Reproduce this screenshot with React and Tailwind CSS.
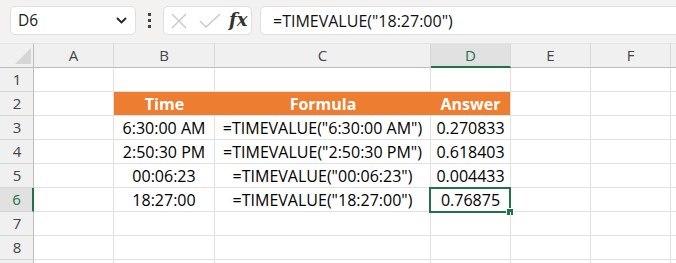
import React from "react";

const rows = [
  { n: 1, b: "", c: "", d: "" },
  { n: 2, b: "Time", c: "Formula", d: "Answer", head: true },
  { n: 3, b: "6:30:00 AM", c: '=TIMEVALUE("6:30:00 AM")', d: "0.270833" },
  { n: 4, b: "2:50:30 PM", c: '=TIMEVALUE("2:50:30 PM")', d: "0.618403" },
  { n: 5, b: "00:06:23", c: '=TIMEVALUE("00:06:23")', d: "0.004433" },
  { n: 6, b: "18:27:00", c: '=TIMEVALUE("18:27:00")', d: "0.76875", sel: true },
  { n: 7, b: "", c: "", d: "" },
  { n: 8, b: "", c: "", d: "" },
  { n: "", b: "", c: "", d: "" },
];

const cell = "h-[24px] border-b border-r border-[#e1e1e1] flex items-center justify-center text-[16px] text-black whitespace-nowrap";
const orange = "h-[24px] border-b border-[#e1e1e1] bg-[#ed7d31] flex items-center justify-center text-[16px] font-bold text-white whitespace-nowrap";

function Row({ r }) {
  return (
    <>
      <div
        className={
          r.sel
            ? "h-[24px] border-b border-[#d4d4d4] border-r-2 border-r-[#217346] bg-[#e1e1e1] text-[#217346] flex items-center justify-center text-[15px]"
            : "h-[24px] border-b border-[#d4d4d4] border-r border-r-[#bcbcbc] bg-[#f0f0f0] text-[#444] flex items-center justify-center text-[15px]"
        }
      >
        <span className="ml-[1px]">{r.n}</span>
      </div>
      <div className={cell}></div>
      {r.head ? (
        <>
          <div className={orange}>{r.b}</div>
          <div className={orange}>{r.c}</div>
          <div className={orange + " border-r border-r-[#e1e1e1]"}>{r.d}</div>
        </>
      ) : (
        <>
          <div className={cell}>{r.b}</div>
          <div className={cell}>{r.c}</div>
          <div className={cell + " relative"}>
            {r.d}
            {r.sel && (
              <div className="absolute -left-[2px] -top-[1px] w-[82px] h-[26px] border-2 border-[#217346]">
                <div className="absolute -right-[4px] -bottom-[4px] w-[6px] h-[6px] bg-[#217346] outline outline-1 outline-white"></div>
              </div>
            )}
          </div>
        </>
      )}
      <div className={cell}></div>
      <div className={cell}></div>
      <div className="h-[24px] border-b border-[#e1e1e1]"></div>
    </>
  );
}

export default function App() {
  const colHead = "h-[24px] border-b border-[#bcbcbc] border-r border-r-[#d9d9d9] bg-[#f0f0f0] flex items-center justify-center text-[15px] text-[#444]";
  return (
    <div className="w-[676px] h-[263px] overflow-hidden bg-white font-['Open_Sans',sans-serif]">
      {/* toolbar */}
      <div className="h-[44px] bg-[#f3f2f1] flex items-start pt-[6px] pl-[10px] border-b border-[#e6e4e2]">
        <div className="w-[126px] h-[29px] bg-white rounded-[5px] border border-[#e1dfdd] flex items-center pl-[7px] pr-[8px] justify-between">
          <span className="text-[15.5px] text-[#222]">D6</span>
          <svg width="11" height="7" viewBox="0 0 11 7">
            <path d="M1 1 L5.5 5.5 L10 1" fill="none" stroke="#222" strokeWidth="1.8" />
          </svg>
        </div>
        <div className="w-[27px] h-[29px] flex flex-col items-center justify-center gap-[3px]">
          <div className="w-[3px] h-[3px] bg-[#444]"></div>
          <div className="w-[3px] h-[3px] bg-[#444]"></div>
          <div className="w-[3px] h-[3px] bg-[#444]"></div>
        </div>
        <div className="w-[89px] h-[29px] bg-white rounded-[5px] border border-[#e1dfdd] flex items-center pl-[6px]">
          <svg width="16" height="16" viewBox="0 0 16 16" className="ml-[1px]">
            <path d="M1 1 L15 15 M15 1 L1 15" stroke="#c6c6c6" strokeWidth="1.3" />
          </svg>
          <svg width="22" height="16" viewBox="0 0 22 16" className="ml-[12px]">
            <path d="M1 8 L7 14 L21 1" fill="none" stroke="#c6c6c6" strokeWidth="1.3" />
          </svg>
          <span className="ml-[8px] font-['DejaVu_Serif',serif] italic font-bold text-[18px] text-[#333] leading-none -mt-[2px]">fx</span>
        </div>
        <div className="flex-1 h-[29px] ml-[8px] -mr-[6px] bg-white rounded-l-[5px] border border-[#e1dfdd] flex items-center pl-[12px]">
          <span className="text-[16px] text-[#111]">=TIMEVALUE("18:27:00")</span>
        </div>
      </div>
      {/* grid */}
      <div className="grid grid-cols-[34px_80px_101px_216px_80px_80px_80px_1fr]">
        <div className="h-[24px] border-b border-[#bcbcbc] border-r border-r-[#bcbcbc] bg-[#f0f0f0] relative">
          <svg width="16" height="16" viewBox="0 0 16 16" className="absolute left-[15px] top-[4px]">
            <path d="M16 0 L16 16 L0 16 Z" fill="#d6d6d6" />
          </svg>
        </div>
        <div className={colHead}>A</div>
        <div className={colHead}>B</div>
        <div className={colHead}>C</div>
        <div className="h-[24px] border-b-2 border-[#217346] border-r border-r-[#d9d9d9] bg-[#e1e1e1] flex items-center justify-center text-[15px] text-[#217346]">D</div>
        <div className={colHead}>E</div>
        <div className={colHead}>F</div>
        <div className="h-[24px] border-b border-[#bcbcbc] bg-[#f0f0f0]"></div>
        {rows.map((r, i) => (
          <Row key={i} r={r} />
        ))}
      </div>
    </div>
  );
}
